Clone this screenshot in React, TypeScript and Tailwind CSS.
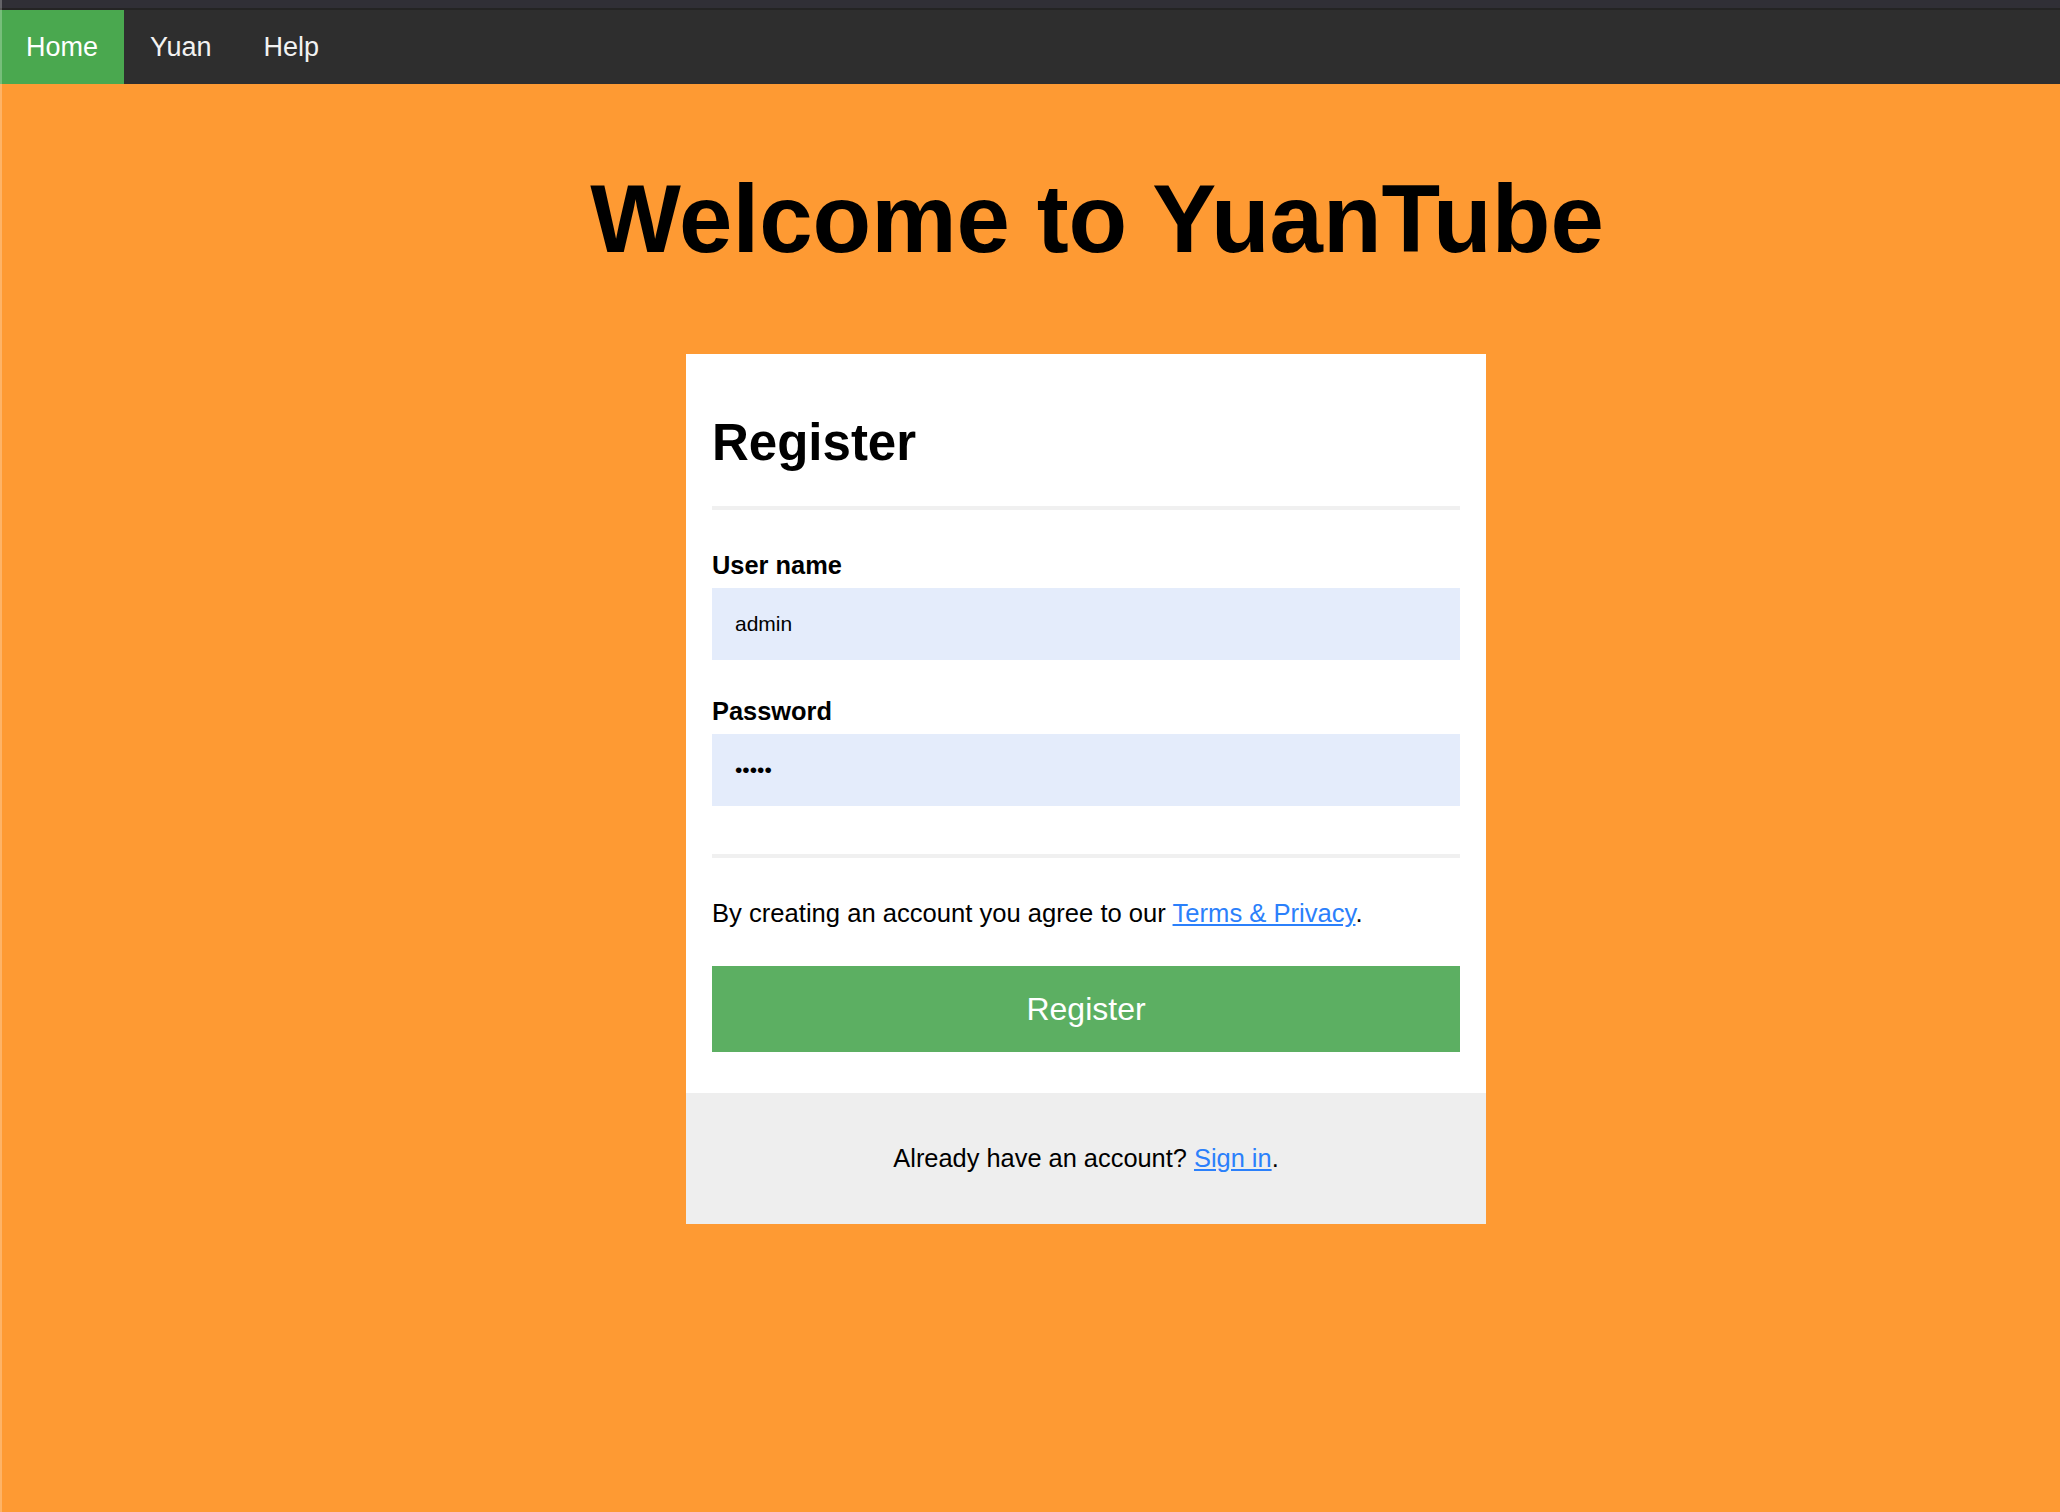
import React from 'react';

const navLinks = ['Home', 'Yuan', 'Help'];

export default function App() {
  return (
    <div className="relative min-h-screen bg-[#fe9a33] font-['Liberation_Sans',Arial,sans-serif] text-black">
      {/* window edge */}
      <div className="absolute inset-y-0 left-0 w-[2px] bg-white/25" />
      <div className="h-[8px] bg-[#302f36]" />
      <div className="h-[2px] bg-[#242424]" />

      <nav className="flex h-[74px] bg-[#2e2e2e]">
        {navLinks.map((link, i) => (
          <a
            key={link}
            href="#"
            className={
              i === 0
                ? 'flex items-center px-[26px] text-[27px] text-white bg-[#4aa84f]'
                : 'flex items-center px-[26px] text-[27px] text-[#f2f2f2]'
            }
          >
            {link}
          </a>
        ))}
      </nav>

      <main className="pl-[112px] pb-[80px]">
        <h1 className="mt-[80px] pl-[22px] text-center text-[96px] font-bold leading-[1.15]">
          Welcome to YuanTube
        </h1>

        <div className="mx-auto mt-[80px] w-[800px] bg-white">
          <form className="px-[26px] pt-[26px] pb-[41px]">
            <h2 className="mt-[34px] text-[51px] font-bold leading-[1.15]">Register</h2>
            <div className="mt-[33px] h-[4px] bg-[#f0f0f0]" />

            <label className="mt-[41px] block text-[25.4px] font-bold leading-[1.15]">User name</label>
            <input
              type="text"
              readOnly
              value="admin"
              className="mt-[8px] block h-[72px] w-full bg-[#e4ecfb] pl-[23px] text-[21px] text-black outline-none"
            />

            <label className="mt-[37px] block text-[25.4px] font-bold leading-[1.15]">Password</label>
            <input
              type="password"
              readOnly
              value="admin"
              className="mt-[8px] block h-[72px] w-full bg-[#e4ecfb] pl-[23px] text-[21px] text-black outline-none"
            />

            <div className="mt-[48px] h-[4px] bg-[#f0f0f0]" />

            <p className="mt-[41px] text-[25.6px] leading-[1.15]">
              By creating an account you agree to our{' '}
              <a href="#" className="text-[#2b80fb] underline">Terms &amp; Privacy</a>.
            </p>

            <button
              type="button"
              className="mt-[37px] flex h-[86px] w-full items-center justify-center bg-[#5caf62] text-[32px] text-white"
            >
              Register
            </button>
          </form>

          <div className="bg-[#eeeeee] py-[51px] text-center text-[25.4px] leading-[1.15]">
            Already have an account? <a href="#" className="text-[#2b80fb] underline">Sign in</a>.
          </div>
        </div>
      </main>
    </div>
  );
}
